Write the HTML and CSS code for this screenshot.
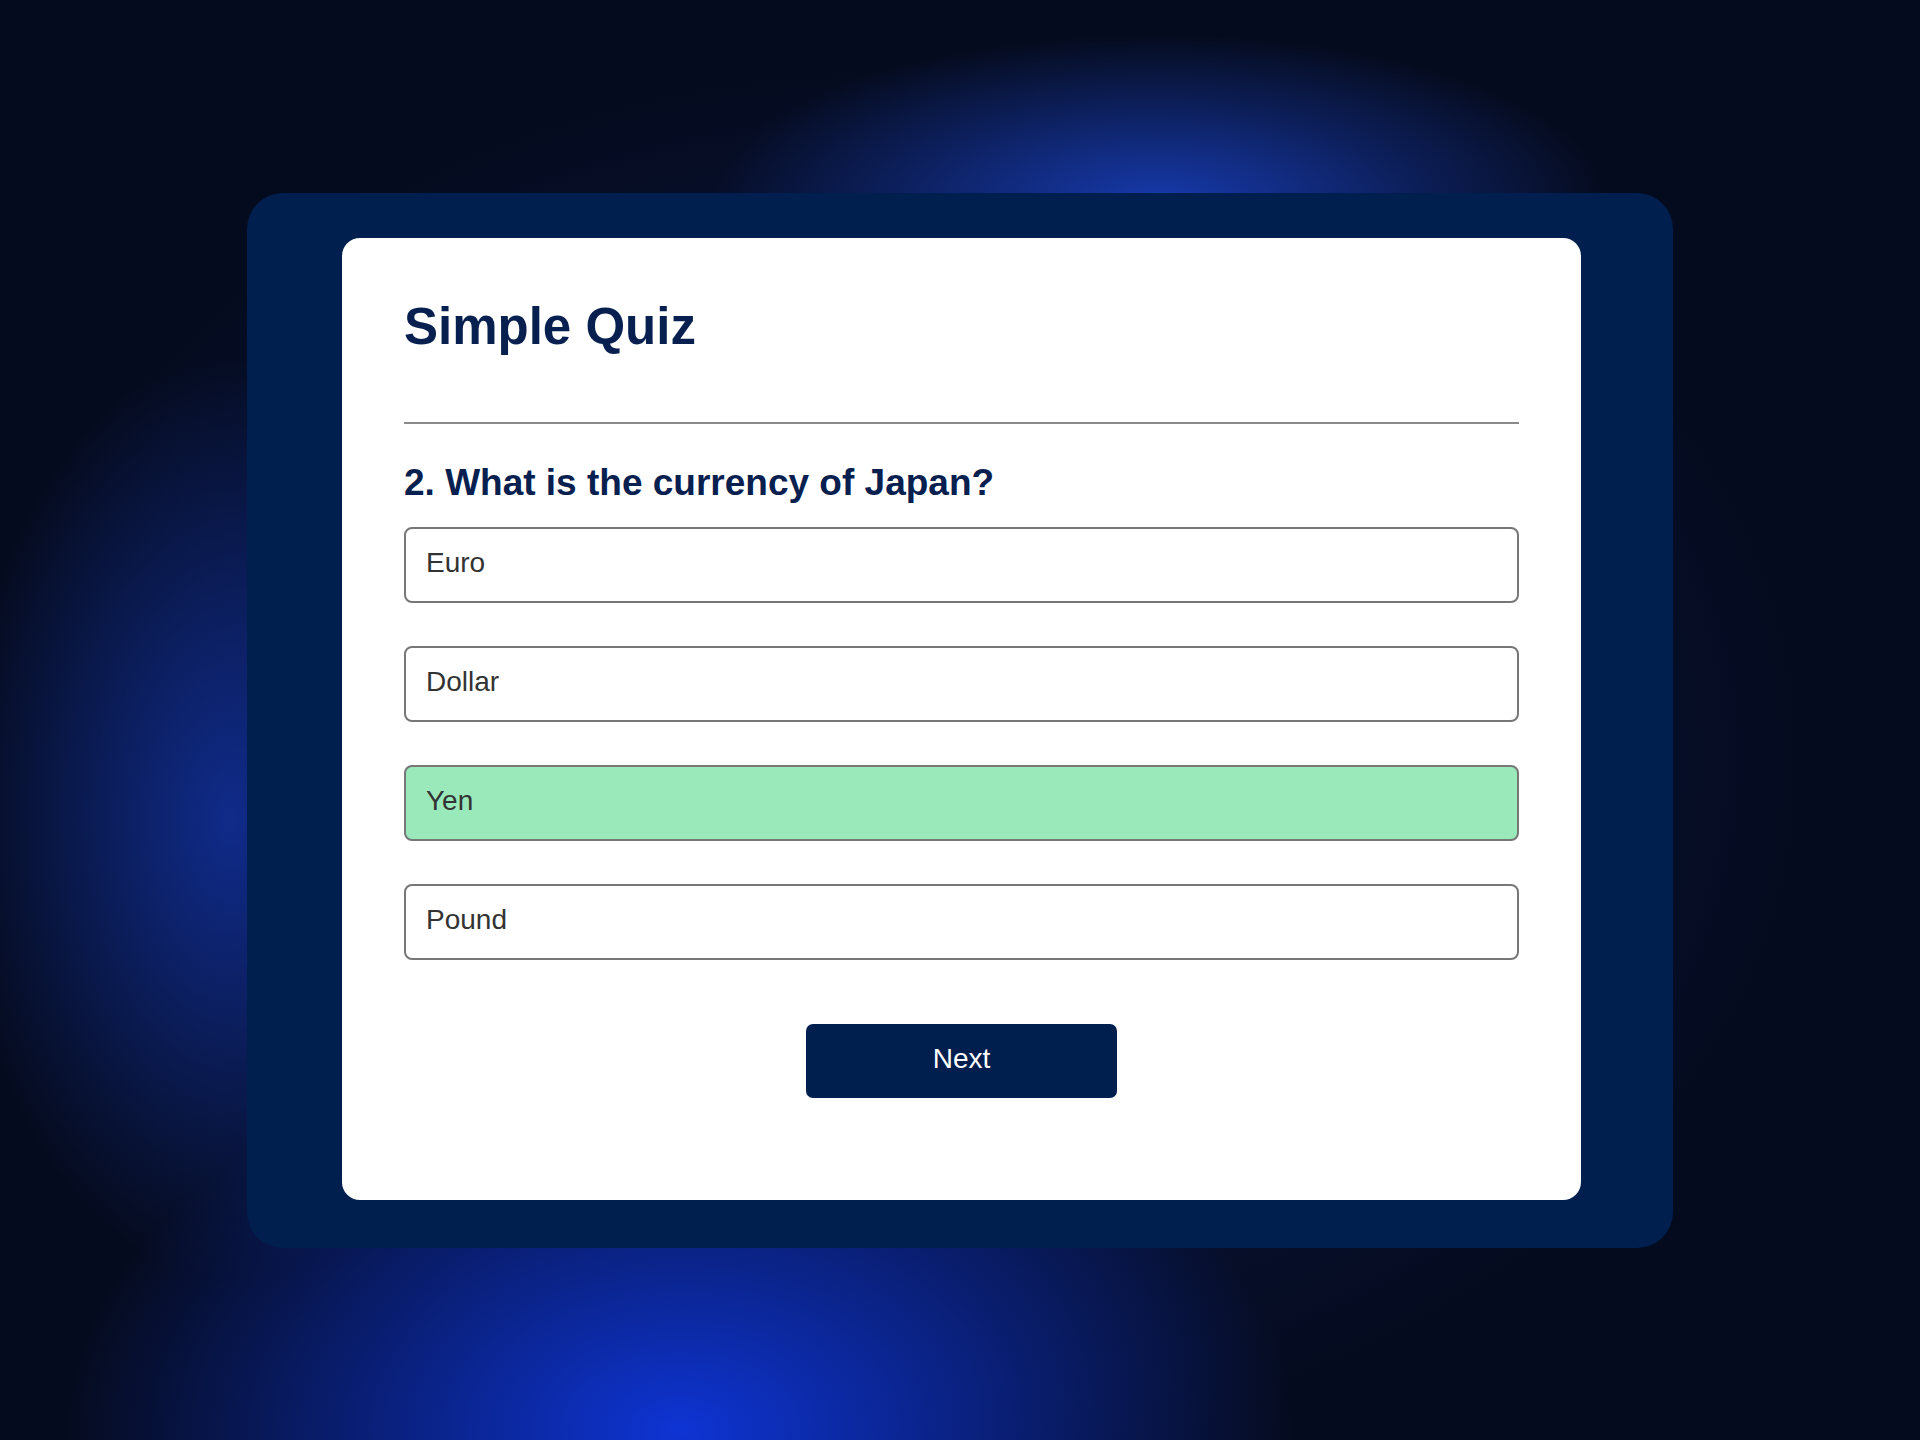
FILE: index.html
```html
<!DOCTYPE html>
<html lang="en">
<head>
  <meta charset="UTF-8">
  <title>Simple Quiz</title>
  <link rel="stylesheet" href="styles.css">
</head>
<body>

  <div class="frame">
    <div class="quiz">
      <h1>Simple Quiz</h1>
      <hr>
      <h2 id="question">2. What is the currency of Japan?</h2>

      <div class="answers" id="answers">
        <button class="answer">Euro</button>
        <button class="answer">Dollar</button>
        <button class="answer correct">Yen</button>
        <button class="answer">Pound</button>
      </div>

      <button class="next-btn" id="nextBtn">Next</button>
    </div>
  </div>

</body>
</html>
```

FILE: styles.css
```css
* {
  box-sizing: border-box;
}

body {
  margin: 0;
  min-height: 1440px;
  font-family: 'Liberation Sans', Arial, sans-serif;
  display: flex;
  align-items: center;
  justify-content: center;
  background:
    radial-gradient(ellipse 620px 230px at 1160px 200px, rgba(28, 72, 215, 0.75), rgba(28, 72, 215, 0) 72%),
    radial-gradient(ellipse 820px 520px at 680px 1430px, rgba(14, 52, 212, 1), rgba(14, 52, 212, 0) 75%),
    radial-gradient(ellipse 380px 640px at 230px 820px, rgba(22, 62, 200, 0.6), rgba(22, 62, 200, 0) 72%),
    radial-gradient(ellipse 1150px 880px at 900px 760px, #0a1a52, #050b1e 80%),
    #040916;
}

.frame {
  width: 1426px;
  background-color: #001f4f;
  border-radius: 36px;
  padding: 45px 92px 48px 95px;
}

.quiz {
  background: white;
  border-radius: 18px;
  padding: 60px 62px 102px;
}

h1 {
  margin: 0;
  font-size: 51px;
  line-height: 58px;
  color: #07204f;
}

hr {
  margin: 66px 0 0;
  border: none;
  height: 2px;
  background-color: #8a8a8a;
}

h2 {
  margin: 38px 0 0;
  font-size: 37px;
  line-height: 42px;
  color: #07204f;
}

.answers {
  margin-top: 23px;
  display: flex;
  flex-direction: column;
  gap: 43px;
}

.answer {
  height: 76px;
  width: 100%;
  background: white;
  border: 2px solid #777;
  border-radius: 8px;
  padding: 0 20px 3px;
  text-align: left;
  font-family: 'Liberation Sans', Arial, sans-serif;
  font-size: 28px;
  color: #333;
  cursor: pointer;
}

.answer.correct {
  background-color: #9ae9bb;
}

.next-btn {
  display: block;
  margin: 64px auto 0;
  width: 311px;
  height: 74px;
  padding-bottom: 4px;
  background-color: #001f4f;
  color: white;
  border: none;
  border-radius: 7px;
  font-family: 'Liberation Sans', Arial, sans-serif;
  font-size: 28px;
  cursor: pointer;
}
```
